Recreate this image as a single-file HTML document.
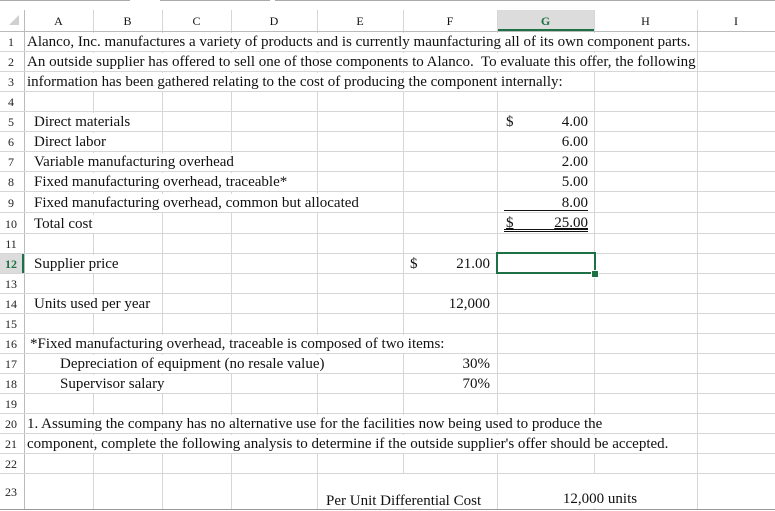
<!DOCTYPE html>
<html><head><meta charset="utf-8"><style>
body{margin:0;width:775px;height:511px;overflow:hidden;background:#fff;position:relative;font-family:"Liberation Serif",serif;color:#111}
.v{position:absolute;width:1px;background:#d6d6d6}
.h{position:absolute;height:1px;background:#d6d6d6;left:0;width:775px}
.t{position:absolute;background:#fff;font-size:15px;line-height:18px;white-space:nowrap;height:18px}
.r{position:absolute;font-size:12px;line-height:18px;width:22px;text-align:center;color:#222}
.c{position:absolute;top:12px;font-size:12px;line-height:18px;text-align:center}
.n{position:absolute;font-size:15px;line-height:18px;text-align:right;white-space:nowrap}
</style></head><body>
<div style="position:absolute;left:0;top:0;width:130px;height:1px;background:#aaa"></div>
<div style="position:absolute;left:160px;top:0;width:110px;height:1px;background:#aaa"></div>
<div style="position:absolute;left:275px;top:0;width:500px;height:1px;background:#aaa"></div>
<svg style="position:absolute;left:8px;top:14px" width="12" height="12"><polygon points="11,1 11,11 1,11" fill="#d0d0d0"/></svg>
<div style="position:absolute;left:497px;top:10px;width:97px;height:21px;background:#dcdcdc;border-bottom:2px solid #1e7145;box-sizing:border-box"></div>
<div style="position:absolute;left:0;top:253px;width:24px;height:20px;background:#dcdcdc;border-right:2px solid #1e7145;box-sizing:border-box"></div>
<div class="v" style="left:24px;top:10px;height:500px;background:#bbb"></div>
<div class="v" style="left:93px;top:10px;height:500px"></div>
<div class="v" style="left:162px;top:10px;height:500px"></div>
<div class="v" style="left:231px;top:10px;height:500px"></div>
<div class="v" style="left:317px;top:10px;height:500px"></div>
<div class="v" style="left:403px;top:10px;height:500px"></div>
<div class="v" style="left:497px;top:10px;height:500px"></div>
<div class="v" style="left:594px;top:10px;height:500px"></div>
<div class="v" style="left:697px;top:10px;height:500px"></div>
<div class="h" style="top:31px;background:#bbb"></div>
<div class="h" style="top:51px"></div><div class="h" style="top:71px"></div><div class="h" style="top:91px"></div>
<div class="h" style="top:111px"></div><div class="h" style="top:131px"></div><div class="h" style="top:151px"></div>
<div class="h" style="top:171px"></div><div class="h" style="top:191px"></div><div class="h" style="top:212px"></div>
<div class="h" style="top:233px"></div><div class="h" style="top:253px"></div><div class="h" style="top:273px"></div>
<div class="h" style="top:293px"></div><div class="h" style="top:313px"></div><div class="h" style="top:333px"></div>
<div class="h" style="top:353px"></div><div class="h" style="top:373px"></div><div class="h" style="top:393px"></div>
<div class="h" style="top:413px"></div><div class="h" style="top:433px"></div><div class="h" style="top:453px"></div>
<div class="h" style="top:473px"></div>
<div class="h" style="top:509px;background:#999"></div>
<div class="c" style="left:24px;width:69px">A</div>
<div class="c" style="left:93px;width:69px">B</div>
<div class="c" style="left:162px;width:69px">C</div>
<div class="c" style="left:231px;width:86px">D</div>
<div class="c" style="left:317px;width:86px">E</div>
<div class="c" style="left:403px;width:94px">F</div>
<div class="c" style="left:497px;width:97px;color:#1e7145;font-weight:bold">G</div>
<div class="c" style="left:594px;width:103px">H</div>
<div class="c" style="left:697px;width:78px">I</div>
<div class="r" style="top:33px">1</div><div class="r" style="top:53px">2</div><div class="r" style="top:73px">3</div>
<div class="r" style="top:93px">4</div><div class="r" style="top:113px">5</div><div class="r" style="top:133px">6</div>
<div class="r" style="top:153px">7</div><div class="r" style="top:173px">8</div><div class="r" style="top:194px">9</div>
<div class="r" style="top:215px">10</div><div class="r" style="top:235px">11</div>
<div class="r" style="top:255px;color:#1e7145;font-weight:bold">12</div>
<div class="r" style="top:275px">13</div><div class="r" style="top:295px">14</div><div class="r" style="top:315px">15</div>
<div class="r" style="top:335px">16</div><div class="r" style="top:355px">17</div><div class="r" style="top:375px">18</div>
<div class="r" style="top:395px">19</div><div class="r" style="top:415px">20</div><div class="r" style="top:435px">21</div>
<div class="r" style="top:455px">22</div><div class="r" style="top:483px">23</div>
<div class="t" style="left:25px;top:33px;width:672px;padding-left:2px;box-sizing:border-box">Alanco, Inc. manufactures a variety of products and is currently maunfacturing all of its own component parts.</div>
<div class="t" style="left:25px;top:53px;width:672px;padding-left:2px;box-sizing:border-box">An outside supplier has offered to sell one of those components to Alanco.&nbsp; To evaluate this offer, the following</div>
<div class="t" style="left:25px;top:73px;width:569px;padding-left:2px;box-sizing:border-box">information has been gathered relating to the cost of producing the component internally:</div>
<div class="t" style="left:25px;top:113px;width:137px;padding-left:9px;box-sizing:border-box">Direct materials</div>
<div class="t" style="left:25px;top:133px;width:137px;padding-left:9px;box-sizing:border-box">Direct labor</div>
<div class="t" style="left:25px;top:153px;width:292px;padding-left:9px;box-sizing:border-box">Variable manufacturing overhead</div>
<div class="t" style="left:25px;top:173px;width:292px;padding-left:9px;box-sizing:border-box">Fixed manufacturing overhead, traceable*</div>
<div class="t" style="left:25px;top:194px;width:378px;padding-left:9px;box-sizing:border-box">Fixed manufacturing overhead, common but allocated</div>
<div class="t" style="left:25px;top:215px;width:137px;padding-left:9px;box-sizing:border-box">Total cost</div>
<div class="t" style="left:25px;top:255px;width:137px;padding-left:9px;box-sizing:border-box">Supplier price</div>
<div class="t" style="left:25px;top:295px;width:137px;padding-left:9px;box-sizing:border-box">Units used per year</div>
<div class="t" style="left:25px;top:335px;width:472px;padding-left:5px;box-sizing:border-box">*Fixed manufacturing overhead, traceable is composed of two items:</div>
<div class="t" style="left:25px;top:355px;width:378px;padding-left:35px;box-sizing:border-box">Depreciation of equipment (no resale value)</div>
<div class="t" style="left:25px;top:375px;width:206px;padding-left:35px;box-sizing:border-box">Supervisor salary</div>
<div class="t" style="left:25px;top:415px;width:672px;padding-left:2px;box-sizing:border-box">1. Assuming the company has no alternative use for the facilities now being used to produce the</div>
<div class="t" style="left:25px;top:435px;width:672px;padding-left:2px;box-sizing:border-box">component, complete the following analysis to determine if the outside supplier's offer should be accepted.</div>
<div class="t" style="left:318px;top:474px;width:179px;height:34px"><span style="position:absolute;left:8px;top:18px">Per Unit Differential Cost</span></div>
<div class="t" style="left:498px;top:474px;width:199px;height:34px"><span style="position:absolute;left:0;width:204px;text-align:center;top:16px">12,000 units</span></div>
<div class="n" style="left:506px;top:113px">$</div><div class="n" style="left:500px;top:113px;width:88px">4.00</div>
<div class="n" style="left:500px;top:133px;width:88px">6.00</div>
<div class="n" style="left:500px;top:153px;width:88px">2.00</div>
<div class="n" style="left:500px;top:173px;width:88px">5.00</div>
<div class="n" style="left:500px;top:194px;width:88px">8.00</div>
<div style="position:absolute;left:504px;top:210px;width:84px;height:1px;background:#111"></div>
<div class="n" style="left:506px;top:214px;text-decoration:underline">$</div><div class="n" style="left:500px;top:214px;width:88px;text-decoration:underline">25.00</div>
<div style="position:absolute;left:504px;top:229px;width:84px;height:1px;background:#111"></div>
<div style="position:absolute;left:504px;top:231px;width:84px;height:1px;background:#111"></div>
<div class="n" style="left:410px;top:255px">$</div><div class="n" style="left:403px;top:255px;width:87px">21.00</div>
<div class="n" style="left:403px;top:295px;width:87px">12,000</div>
<div class="n" style="left:403px;top:355px;width:87px">30%</div>
<div class="n" style="left:403px;top:375px;width:87px">70%</div>
<div style="position:absolute;left:496px;top:252px;width:100px;height:22px;border:2px solid #1e7145;box-sizing:border-box"></div>
<div style="position:absolute;left:591px;top:270px;width:6px;height:6px;background:#1e7145;border:1px solid #fff"></div>
</body></html>
